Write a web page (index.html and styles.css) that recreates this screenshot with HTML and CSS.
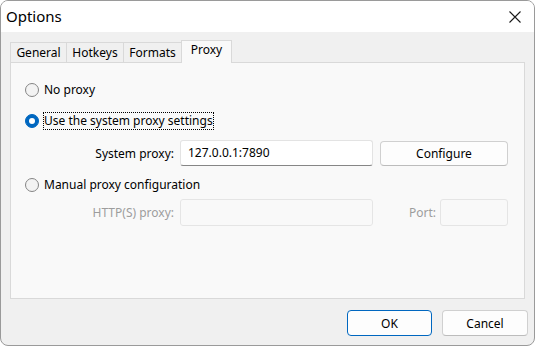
FILE: index.html
```html
<!DOCTYPE html>
<html lang="en">
<head>
    <meta charset="UTF-8">
    <meta name="viewport" content="width=device-width, initial-scale=1.0">
    <title>Options</title>
    <link rel="stylesheet" href="styles.css">
</head>
<body>
    <div class="window">
        <div class="titlebar">
            <span class="title">Options</span>
            <svg class="close-icon" width="12" height="12" viewBox="0 0 12 12">
                <path d="M0.5 0.5 L11.5 11.5 M11.5 0.5 L0.5 11.5" stroke="#1a1a1a" stroke-width="1.1" fill="none"/>
            </svg>
        </div>

        <div class="dialog-body">
            <div class="tabs">
                <div class="tab tab-general">General</div>
                <div class="tab tab-hotkeys">Hotkeys</div>
                <div class="tab tab-formats">Formats</div>
                <div class="tab tab-proxy active">Proxy</div>
            </div>

            <div class="panel">
                <label class="radio-row first">
                    <span class="radio"></span>
                    <span class="radio-text">No proxy</span>
                </label>

                <label class="radio-row second">
                    <span class="radio checked"></span>
                    <span class="radio-text focused">Use the system proxy settings</span>
                </label>

                <div class="field-row system-row">
                    <span class="field-label">System proxy:</span>
                    <div class="text-input">127.0.0.1:7890</div>
                    <button class="btn configure-btn">Configure</button>
                </div>

                <label class="radio-row third">
                    <span class="radio"></span>
                    <span class="radio-text">Manual proxy configuration</span>
                </label>

                <div class="field-row manual-row disabled">
                    <span class="field-label">HTTP(S) proxy:</span>
                    <div class="text-input"></div>
                    <span class="port-label">Port:</span>
                    <div class="text-input port-input"></div>
                </div>
            </div>

            <div class="footer">
                <button class="btn ok-btn">OK</button>
                <button class="btn cancel-btn">Cancel</button>
            </div>
        </div>
    </div>
</body>
</html>
```

FILE: styles.css
```css
html, body {
    margin: 0;
    padding: 0;
    background: #ffffff;
}
body {
    font-family: 'Noto Sans', 'Open Sans', Arial, sans-serif;
    font-size: 12px;
    color: #000000;
}
.window {
    width: 535px;
    height: 346px;
    box-sizing: border-box;
    border: 1px solid #9a9a9a;
    border-radius: 8px;
    overflow: hidden;
    display: flex;
    flex-direction: column;
    background: #f0f0f0;
}
.titlebar {
    height: 31px;
    flex-shrink: 0;
    background: #ffffff;
    display: flex;
    align-items: center;
    justify-content: space-between;
    padding: 0 13px 0 5px;
}
.title {
    font-size: 15px;
    margin-top: -1px;
}
.close-icon {
    display: block;
    margin-top: 1px;
}
.dialog-body {
    flex: 1;
    display: flex;
    flex-direction: column;
    padding-top: 8px;
}
/* Tabs */
.tabs {
    display: flex;
    align-items: flex-end;
    height: 22px;
    margin: 0 9px;
    position: relative;
    z-index: 1;
}
.tab {
    height: 20px;
    box-sizing: border-box;
    text-align: center;
    line-height: 19px;
    border: 1px solid #d9d9d9;
    border-bottom: none;
    border-left: none;
    background: #f0f0f0;
}
.tab:first-child {
    border-left: 1px solid #d9d9d9;
}
.tab-general { width: 57px; }
.tab-hotkeys { width: 57px; }
.tab-formats { width: 58px; }
.tab.active {
    width: 51px;
    height: 23px;
    margin-bottom: -1px;
    margin-left: -1px;
    border-left: 1px solid #d9d9d9;
    background: #f9f9f9;
    line-height: 17px;
}
.panel {
    flex: 1;
    margin: 0 9px;
    background: #f9f9f9;
    border: 1px solid #d9d9d9;
    padding: 18px 16px 0 14px;
    display: flex;
    flex-direction: column;
}
/* Radio rows */
.radio-row {
    display: flex;
    align-items: center;
    height: 18px;
}
.radio-row.second {
    margin-top: 13px;
}
.radio-row.third {
    margin-top: 10px;
}
.radio {
    width: 14px;
    height: 14px;
    box-sizing: border-box;
    border-radius: 50%;
    border: 1px solid #858585;
    background: #f3f3f3;
    margin-right: 4px;
    flex-shrink: 0;
    display: flex;
    align-items: center;
    justify-content: center;
}
.radio.checked {
    border-color: #0067c0;
    background: #0067c0;
}
.radio.checked::after {
    content: "";
    width: 6px;
    height: 6px;
    border-radius: 50%;
    background: #ffffff;
}
.radio-text {
    padding: 0;
    line-height: 16px;
    border: 1px dotted transparent;
}
.radio-text.focused {
    border-color: #000000;
}
/* Field rows */
.field-row {
    display: flex;
    align-items: center;
}
.system-row {
    margin-top: 10px;
}
.manual-row {
    margin-top: 5px;
}
.field-label {
    width: 149px;
    text-align: right;
    margin-right: 6px;
}
.text-input {
    width: 193px;
    height: 26px;
    box-sizing: border-box;
    background: #ffffff;
    border: 1px solid #e3e3e3;
    border-bottom-color: #868686;
    border-radius: 3px;
    padding: 0 7px;
    line-height: 24px;
}
.disabled {
    color: #9d9d9d;
}
.disabled .text-input {
    height: 27px;
    background: #f9f9f9;
    border: 1px solid #e5e5e5;
}
.port-label {
    width: 63px;
    text-align: right;
    margin-right: 4px;
}
.text-input.port-input {
    width: 68px;
}
/* Buttons */
.btn {
    font-family: inherit;
    font-size: 12px;
    color: #000000;
    height: 26px;
    box-sizing: border-box;
    background: #fdfdfd;
    border: 1px solid #d0d0d0;
    border-bottom-color: #bcbcbc;
    border-radius: 4px;
    padding: 0;
}
.configure-btn {
    width: 128px;
    height: 25px;
    margin-left: 7px;
}
.footer {
    display: flex;
    justify-content: flex-end;
    gap: 10px;
    padding: 11px 6px 9px 0;
}
.ok-btn {
    width: 85px;
    border: 1px solid #0067c0;
}
.cancel-btn {
    width: 86px;
}
```
